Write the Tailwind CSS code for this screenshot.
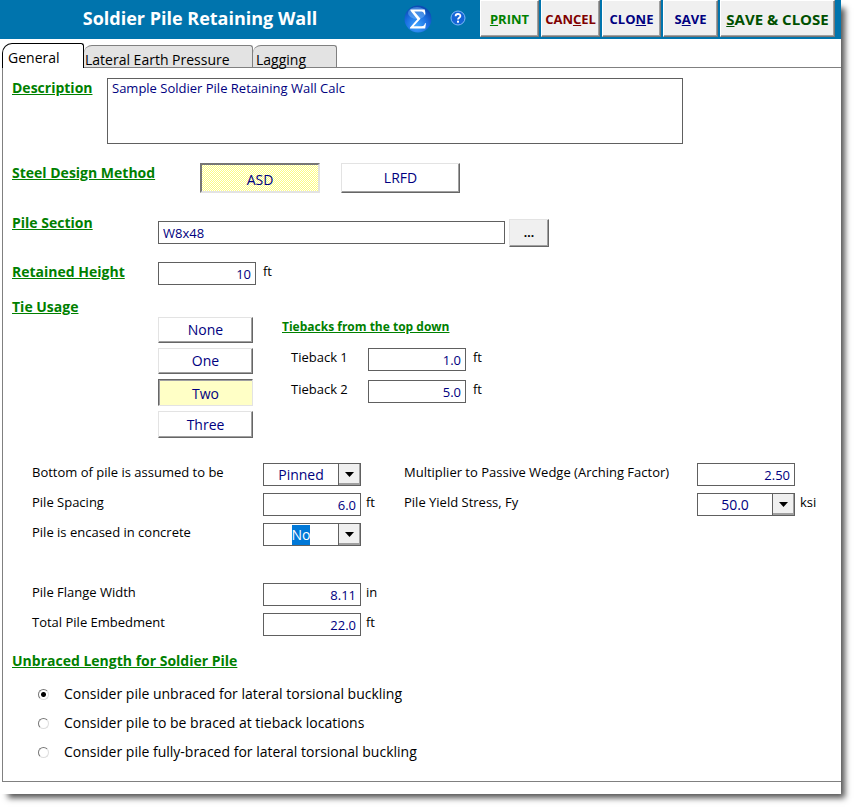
<!DOCTYPE html>
<html lang="en">
<head>
  <meta charset="UTF-8" />
  <meta name="viewport" content="width=device-width, initial-scale=1.0"/>
  <title>Soldier Pile Retaining Wall</title>
  <script src="https://cdn.jsdelivr.net/npm/@tailwindcss/browser@4"></script>
</head>
<body class="bg-white font-['Open_Sans',sans-serif] text-black text-[13px] leading-5 pb-[15px]">

  <div class="mr-[15px] bg-white shadow-[6px_6px_6px_-2px_#555] pb-3">

    <!-- Header -->
    <header class="flex items-start h-[39px] bg-[#0074ad] pr-[6px]">
      <h1 class="w-[400px] text-center text-[18px] leading-9 font-bold text-white">Soldier Pile Retaining Wall</h1>
      <div class="flex-1 flex items-center gap-[18px] h-9 pl-1">
        <button aria-label="Calculate" class="mt-[2px]">
          <svg class="w-7 h-7" viewBox="0 0 28 28">
            <defs>
              <radialGradient id="ball" cx="0.45" cy="0.75" r="0.7">
                <stop offset="0" stop-color="#3fa4ff"/>
                <stop offset="0.6" stop-color="#1a6ee0"/>
                <stop offset="1" stop-color="#0b4bb5"/>
              </radialGradient>
            </defs>
            <circle cx="14" cy="14" r="13.5" fill="url(#ball)"/>
            <ellipse cx="13" cy="8" rx="9" ry="6" fill="#8cc8ff" fill-opacity="0.4"/>
            <path d="M6.500 4.500H20.800L21.300 9.500H20.300C19.900 7.400 19 6.500 17.200 6.500H10.300L16.500 13.700L9.600 21.300H17.500C19.700 21.300 20.500 20.300 21 18.300H22L21.200 23.500H6V22.500L13.300 14.200L6.500 5.800Z" fill="#fff"/>
          </svg>
        </button>
        <button aria-label="Help">
          <svg class="w-4 h-4" viewBox="0 0 16 16">
            <circle cx="8" cy="8" r="7" fill="#1565d8" stroke="#7db8f5"/>
            <path d="M5.600 6.200C5.600 3.300 10.400 3.300 10.400 6C10.400 7.700 8 7.700 8 9.500" fill="none" stroke="#fff" stroke-width="1.800"/>
            <rect x="7" y="10.700" width="2" height="2" fill="#fff"/>
          </svg>
        </button>
      </div>
      <div class="flex gap-[2px] text-[13px] font-bold">
        <button class="w-[59px] h-[37px] bg-[#f0f0f0] border border-t-white border-l-white border-r-[#777] border-b-[#777] shadow-[inset_-1px_-1px_#a0a0a0] text-[#008000]"><u>P</u>RINT</button>
        <button class="w-[59px] h-[37px] bg-[#f0f0f0] border border-t-white border-l-white border-r-[#777] border-b-[#777] shadow-[inset_-1px_-1px_#a0a0a0] text-[#800000]">CAN<u>C</u>EL</button>
        <button class="w-[59px] h-[37px] bg-[#f0f0f0] border border-t-white border-l-white border-r-[#777] border-b-[#777] shadow-[inset_-1px_-1px_#a0a0a0] text-[#000080]">CLO<u>N</u>E</button>
        <button class="w-[55px] h-[37px] bg-[#f0f0f0] border border-t-white border-l-white border-r-[#777] border-b-[#777] shadow-[inset_-1px_-1px_#a0a0a0] text-[#000080]">S<u>A</u>VE</button>
        <button class="w-[115px] h-[37px] bg-[#f0f0f0] border border-t-white border-l-white border-r-[#777] border-b-[#777] shadow-[inset_-1px_-1px_#a0a0a0] text-[15px] text-[#005000]"><u>S</u>AVE &amp; CLOSE</button>
      </div>
    </header>

    <!-- Tabs -->
    <nav class="flex items-end h-[28px] pl-[2px] text-[14px] leading-4">
      <button class="relative z-10 -mb-px w-[82px] h-[25px] pl-[5px] pt-[3px] text-left bg-white border border-b-0 border-black rounded-tl-[10px] rounded-tr-[3px]">General</button>
      <button class="w-[169px] h-[22px] pl-[1px] pt-[6px] text-left bg-[#e3e3e3] border border-l-0 border-b-0 border-[#808080] rounded-tl-[8px] rounded-tr-[3px]">Lateral Earth Pressure</button>
      <button class="w-[84px] h-[22px] pl-[3px] pt-[6px] text-left bg-[#e3e3e3] border border-l-0 border-b-0 border-[#808080] rounded-tl-[8px] rounded-tr-[3px]">Lagging</button>
    </nav>

    <!-- General tab -->
    <main class="ml-[2px] pl-[9px] pt-[10px] pb-[19px] border border-r-0 border-[#808080]">

      <div class="flex items-start">
        <label for="description" class="w-[95px] text-[14px] font-bold text-[#008000] underline">Description</label>
        <textarea id="description" class="w-[576px] h-[66px] px-1 resize-none border border-[#606060] text-[#000080] leading-[18px]">Sample Soldier Pile Retaining Wall Calc</textarea>
      </div>

      <div class="flex items-start mt-[19px]">
        <span class="w-[188px] text-[14px] font-bold text-[#008000] underline">Steel Design Method</span>
        <button class="w-[120px] h-[30px] pt-1 bg-[repeating-conic-gradient(#fff_0_25%,#ffff80_0_50%)] bg-[length:2px_2px] border-2 border-t-[#777] border-l-[#777] border-r-[#e3e3e3] border-b-[#e3e3e3] text-[14px] text-[#000080]">ASD</button>
        <button class="w-[119px] h-[30px] ml-[21px] bg-white border border-t-[#e3e3e3] border-l-[#e3e3e3] border-r-[#666] border-b-[#666] shadow-[inset_-1px_-1px_#a0a0a0] text-[14px] text-[#000080]">LRFD</button>
      </div>

      <div class="flex items-start mt-[20px]">
        <label for="section" class="w-[146px] text-[14px] font-bold text-[#008000] underline">Pile Section</label>
        <input id="section" value="W8x48" class="w-[347px] h-[23px] mt-2 px-1 border border-[#606060] text-[#000080]" />
        <button class="w-10 h-7 mt-[6px] ml-1 bg-[#f0f0f0] border border-t-[#e3e3e3] border-l-[#e3e3e3] border-r-[#666] border-b-[#666] shadow-[inset_-1px_-1px_#a0a0a0] text-[12px] font-bold">...</button>
      </div>

      <div class="flex items-start mt-[15px]">
        <label for="height" class="w-[146px] text-[14px] font-bold text-[#008000] underline">Retained Height</label>
        <input id="height" value="10" class="w-[98px] h-[23px] px-1 text-right border border-[#606060] text-[#000080]" />
        <span class="ml-[7px] leading-[18px]">ft</span>
      </div>

      <h2 class="mt-[12px] text-[14px] font-bold text-[#008000] underline">Tie Usage</h2>
      <div class="flex items-start pl-[146px]">
        <div class="flex flex-col gap-[5px] w-[95px] text-[14px] text-[#000080]">
          <button class="h-[26px] bg-white border border-t-[#e3e3e3] border-l-[#e3e3e3] border-r-[#666] border-b-[#666] shadow-[inset_-1px_-1px_#a0a0a0]">None</button>
          <button class="h-[26px] bg-white border border-t-[#e3e3e3] border-l-[#e3e3e3] border-r-[#666] border-b-[#666] shadow-[inset_-1px_-1px_#a0a0a0]">One</button>
          <button class="h-[27px] pt-[2px] bg-[#ffffc6] border border-t-[#666] border-l-[#666] border-r-[#e3e3e3] border-b-[#e3e3e3] shadow-[inset_1px_1px_#a0a0a0]">Two</button>
          <button class="h-[27px] bg-white border border-t-[#e3e3e3] border-l-[#e3e3e3] border-r-[#666] border-b-[#666] shadow-[inset_-1px_-1px_#a0a0a0]">Three</button>
        </div>
        <div class="ml-[29px] leading-[18px]">
          <h3 class="text-[12px] leading-5 font-bold text-[#008000] underline">Tiebacks from the top down</h3>
          <div class="flex items-start mt-[11px] pl-[9px]">
            <label for="tieback1" class="w-[77px]">Tieback 1</label>
            <input id="tieback1" value="1.0" class="w-[98px] h-[23px] px-1 text-right border border-[#606060] text-[#000080]" />
            <span class="ml-[7px]">ft</span>
          </div>
          <div class="flex items-start mt-[9px] pl-[9px]">
            <label for="tieback2" class="w-[77px]">Tieback 2</label>
            <input id="tieback2" value="5.0" class="w-[98px] h-[23px] px-1 text-right border border-[#606060] text-[#000080]" />
            <span class="ml-[7px]">ft</span>
          </div>
        </div>
      </div>

      <div class="flex items-start mt-[25px] pl-5 leading-[18px]">
        <div class="grid grid-cols-[231px_98px_43px] auto-rows-[23px] gap-y-[7px]">
          <label for="bottom">Bottom of pile is assumed to be</label>
          <div class="flex border border-[#606060]">
            <div class="flex-1 flex items-center justify-center">
              <select id="bottom" class="appearance-none [field-sizing:content] text-[14px] leading-5 text-[#000080]">
                <option>Pinned</option>
                <option>Fixed</option>
              </select>
            </div>
            <div class="w-[22px] flex items-center justify-center bg-[#f0f0f0] border-l border-l-[#606060] shadow-[inset_-1px_-2px_#a0a0a0]">
              <svg class="w-[9px] h-[5px]" viewBox="0 0 9 5"><path d="M0 0H9L4.500 5Z"/></svg>
            </div>
          </div>
          <span></span>

          <label for="spacing">Pile Spacing</label>
          <input id="spacing" value="6.0" class="px-1 text-right border border-[#606060] text-[#000080]" />
          <span class="pl-[5px]">ft</span>

          <label for="encased">Pile is encased in concrete</label>
          <div class="flex border border-[#606060]">
            <div class="flex-1 flex items-center justify-center">
              <select id="encased" class="appearance-none [field-sizing:content] text-[14px] leading-5 bg-[#0078d7] text-white">
                <option>No</option>
                <option>Yes</option>
              </select>
            </div>
            <div class="w-[22px] flex items-center justify-center bg-[#f0f0f0] border-l border-l-[#606060] shadow-[inset_-1px_-2px_#a0a0a0]">
              <svg class="w-[9px] h-[5px]" viewBox="0 0 9 5"><path d="M0 0H9L4.500 5Z"/></svg>
            </div>
          </div>
          <span></span>

          <label for="flange" class="row-start-5">Pile Flange Width</label>
          <input id="flange" value="8.11" class="row-start-5 px-1 text-right border border-[#606060] text-[#000080]" />
          <span class="row-start-5 pl-[5px]">in</span>

          <label for="embedment" class="row-start-6">Total Pile Embedment</label>
          <input id="embedment" value="22.0" class="row-start-6 px-1 text-right border border-[#606060] text-[#000080]" />
          <span class="row-start-6 pl-[5px]">ft</span>
        </div>

        <div class="grid grid-cols-[293px_98px_auto] auto-rows-[23px] gap-y-[7px]">
          <label for="arching">Multiplier to Passive Wedge (Arching Factor)</label>
          <input id="arching" value="2.50" class="px-1 text-right border border-[#606060] text-[#000080]" />
          <span></span>

          <label for="yield">Pile Yield Stress, Fy</label>
          <div class="flex border border-[#606060]">
            <div class="flex-1 flex items-center justify-center">
              <select id="yield" class="appearance-none [field-sizing:content] text-[14px] leading-5 text-[#000080]">
                <option>50.0</option>
                <option>36.0</option>
              </select>
            </div>
            <div class="w-[22px] flex items-center justify-center bg-[#f0f0f0] border-l border-l-[#606060] shadow-[inset_-1px_-2px_#a0a0a0]">
              <svg class="w-[9px] h-[5px]" viewBox="0 0 9 5"><path d="M0 0H9L4.500 5Z"/></svg>
            </div>
          </div>
          <span class="pl-[5px]">ksi</span>
        </div>
      </div>

      <h2 class="mt-[15px] text-[14px] font-bold text-[#008000] underline">Unbraced Length for Soldier Pile</h2>
      <div class="flex flex-col gap-[9px] mt-[13px] pl-[26px] text-[14px] leading-5">
        <label class="flex items-center gap-[15px]">
          <input type="radio" name="bracing" checked class="appearance-none w-[11px] h-[11px] rounded-full border border-t-[#777] border-l-[#777] border-r-[#ddd] border-b-[#ddd] bg-white checked:bg-[radial-gradient(circle,#000_2px,#fff_3px)]" />
          Consider pile unbraced for lateral torsional buckling
        </label>
        <label class="flex items-center gap-[15px]">
          <input type="radio" name="bracing" class="appearance-none w-[11px] h-[11px] rounded-full border border-t-[#777] border-l-[#777] border-r-[#ddd] border-b-[#ddd] bg-white checked:bg-[radial-gradient(circle,#000_2px,#fff_3px)]" />
          Consider pile to be braced at tieback locations
        </label>
        <label class="flex items-center gap-[15px]">
          <input type="radio" name="bracing" class="appearance-none w-[11px] h-[11px] rounded-full border border-t-[#777] border-l-[#777] border-r-[#ddd] border-b-[#ddd] bg-white checked:bg-[radial-gradient(circle,#000_2px,#fff_3px)]" />
          Consider pile fully-braced for lateral torsional buckling
        </label>
      </div>
    </main>
  </div>

</body>
</html>
